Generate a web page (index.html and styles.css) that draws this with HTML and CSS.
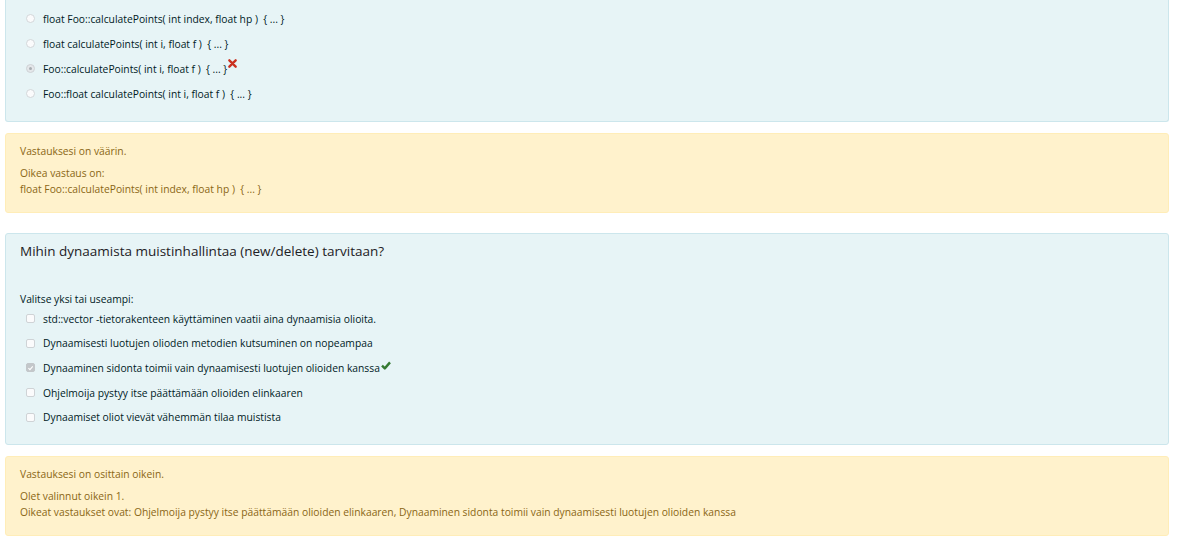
FILE: index.html
```html
<!DOCTYPE html>
<html lang="fi">
<head>
<meta charset="utf-8">
<title>Tentti</title>
<link rel="stylesheet" href="styles.css">
</head>
<body>
<div class="page">
  <section class="que">
    <div class="formulation first">
      <div class="answers radios">
        <div class="opt"><span class="radio"></span><span class="lbl">float Foo::calculatePoints( int index, float hp )&nbsp; { ... }</span></div>
        <div class="opt"><span class="radio"></span><span class="lbl">float calculatePoints( int i, float f )&nbsp; { ... }</span></div>
        <div class="opt"><span class="radio checked"></span><span class="lbl">Foo::calculatePoints( int i, float f )&nbsp; { ... }</span><svg class="mark cross" width="9" height="9" viewBox="0 0 10 10"><path d="M1.5 1.5 L8.5 8.5 M8.5 1.5 L1.5 8.5" stroke="#ca3120" stroke-width="2.6" stroke-linecap="round"/></svg></div>
        <div class="opt"><span class="radio"></span><span class="lbl">Foo::float calculatePoints( int i, float f )&nbsp; { ... }</span></div>
      </div>
    </div>
    <div class="outcome">
      <p class="fb">Vastauksesi on väärin.</p>
      <p>Oikea vastaus on:<br>float Foo::calculatePoints( int index, float hp )&nbsp; { ... }</p>
    </div>
  </section>

  <section class="que">
    <div class="formulation">
      <h3 class="qtext">Mihin dynaamista muistinhallintaa (new/delete) tarvitaan?</h3>
      <div class="prompt">Valitse yksi tai useampi:</div>
      <div class="answers checks">
        <div class="opt"><span class="check"></span><span class="lbl">std::vector -tietorakenteen käyttäminen vaatii aina dynaamisia olioita.</span></div>
        <div class="opt"><span class="check"></span><span class="lbl">Dynaamisesti luotujen olioden metodien kutsuminen on nopeampaa</span></div>
        <div class="opt"><span class="check checked"><svg width="9" height="9" viewBox="0 0 10 10"><path d="M2 5.2 L4.2 7.3 L8.2 2.8" fill="none" stroke="#fff" stroke-width="1.6"/></svg></span><span class="lbl">Dynaaminen sidonta toimii vain dynaamisesti luotujen olioiden kanssa</span><svg class="mark tick" width="10" height="9" viewBox="0 0 10 9"><path d="M1 4.6 L3.8 7.4 L9 1.4" fill="none" stroke="#357a32" stroke-width="2.4" stroke-linejoin="round"/></svg></div>
        <div class="opt"><span class="check"></span><span class="lbl">Ohjelmoija pystyy itse päättämään olioiden elinkaaren</span></div>
        <div class="opt"><span class="check"></span><span class="lbl">Dynaamiset oliot vievät vähemmän tilaa muistista</span></div>
      </div>
    </div>
    <div class="outcome">
      <p class="fb">Vastauksesi on osittain oikein.</p>
      <p>Olet valinnut oikein 1.<br>Oikeat vastaukset ovat: Ohjelmoija pystyy itse päättämään olioiden elinkaaren, Dynaaminen sidonta toimii vain dynaamisesti luotujen olioiden kanssa</p>
    </div>
  </section>
</div>
</body>
</html>
```

FILE: styles.css
```css
html, body {
  margin: 0;
  padding: 0;
  background: #fff;
}
body {
  font-family: "Open Sans", "Noto Sans", sans-serif;
  font-size: 10.3px;
  color: #1d2125;
}
.page {
  width: 1164px;
  padding-left: 5px;
  display: flex;
  flex-direction: column;
  gap: 20px;
}
.que {
  display: flex;
  flex-direction: column;
  gap: 11px;
}
.formulation {
  background: #e7f4f6;
  border: 1px solid #cce6ec;
  border-radius: 3px;
  padding: 7px 14px 15px;
  color: #001a1e;
}
.formulation.first {
  border-top: none;
  border-radius: 0 0 3px 3px;
  padding-top: 6px;
}
.answers {
  display: flex;
  flex-direction: column;
}
.opt {
  display: flex;
  align-items: center;
  height: 25px;
  padding-left: 6px;
}
.checks .opt {
  height: 24.6px;
}
.radio {
  width: 9px;
  height: 9px;
  border-radius: 50%;
  border: 1px solid #d3d7da;
  background: #fbfbfc;
  box-sizing: border-box;
  margin-right: 8px;
  flex: none;
  position: relative;
}
.radio.checked {
  border-color: #cfd3d6;
  background: #e4e7ea;
}
.radio.checked::after {
  content: "";
  position: absolute;
  left: 2px;
  top: 2px;
  width: 3px;
  height: 3px;
  border-radius: 50%;
  background: #a9aeb2;
}
.check {
  width: 9px;
  height: 9px;
  border-radius: 2px;
  border: 1px solid #cfd3d6;
  background: #fbfbfc;
  box-sizing: border-box;
  margin-right: 8px;
  flex: none;
  display: flex;
  align-items: center;
  justify-content: center;
}
.check.checked {
  background: #c3c7ca;
  border-color: #c3c7ca;
}
.check svg {
  display: block;
  width: 8px;
  height: 8px;
}
.lbl {
  white-space: nowrap;
}
.mark {
  display: block;
  align-self: flex-start;
  flex: none;
}
.cross {
  margin-top: 3px;
  margin-left: 1px;
}
.tick {
  margin-top: 5px;
  margin-left: 1px;
}
.qtext {
  margin: 0 0 30px;
  font-size: 13.5px;
  font-weight: 500;
  line-height: 20px;
  color: #1d2125;
}
.prompt {
  line-height: 16px;
}
.outcome {
  background: #fff2cc;
  border: 1px solid #ffedb8;
  border-radius: 3px;
  padding: 9px 14px 14px;
  color: #8a6614;
  line-height: 16.5px;
}
.outcome p {
  margin: 0;
}
.outcome .fb {
  margin-bottom: 5px;
}
```
